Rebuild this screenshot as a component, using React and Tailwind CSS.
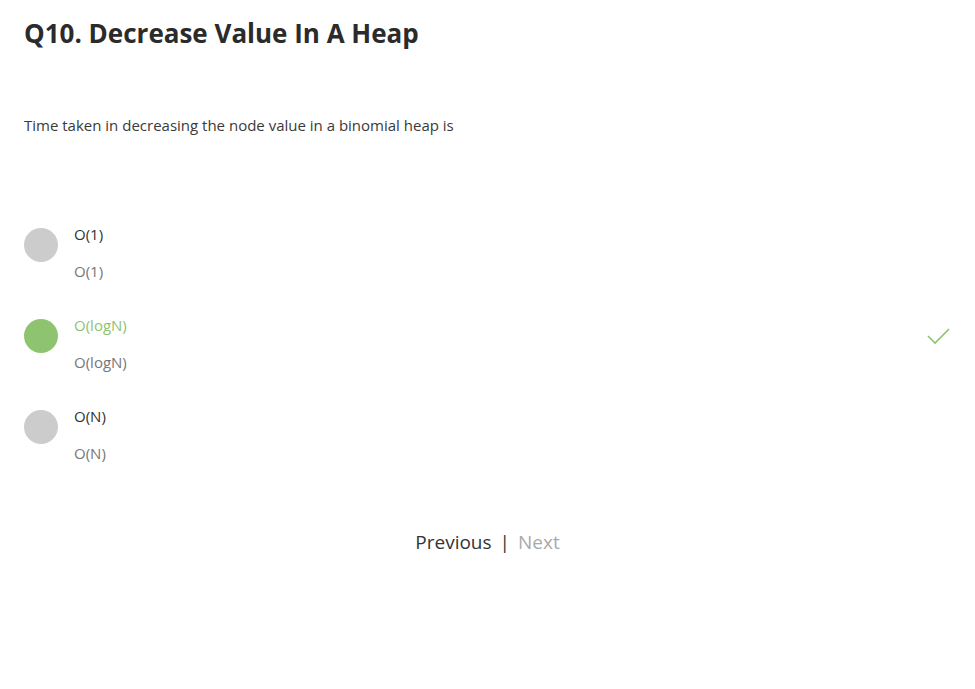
import React from 'react';

const options = [
  { label: 'O(1)', sub: 'O(1)', correct: false },
  { label: 'O(logN)', sub: 'O(logN)', correct: true },
  { label: 'O(N)', sub: 'O(N)', correct: false },
];

export default function App() {
  return (
    <div className="min-h-screen w-full bg-white text-[#333] font-['Open_Sans','Noto_Sans',sans-serif]">
      <div className="px-6 pt-[15px]">
        {/* title */}
        <h1 className="text-[26px] leading-[36px] font-bold text-[#2b2b2b]">
          Q10. Decrease Value In A Heap
        </h1>

        {/* question */}
        <p className="mt-[64px] text-[15px] leading-[20px] text-[#3a3a3a]">
          Time taken in decreasing the node value in a binomial heap is
        </p>

        {/* options */}
        <div className="mt-[90px] flex flex-col gap-[35px]">
          {options.map((o) => (
            <div key={o.label} className="flex items-start h-[56px]">
              <div
                className={
                  'mt-[3px] w-[34px] h-[34px] rounded-full shrink-0 ' +
                  (o.correct ? 'bg-[#8ec36f]' : 'bg-[#cccccc]')
                }
              />
              <div className="ml-4 flex flex-col gap-[18px] text-[15px] leading-[19px]">
                <span className={o.correct ? 'text-[#8ec36f]' : 'text-[#333]'}>{o.label}</span>
                <span className="text-[#777]">{o.sub}</span>
              </div>
              <div className="flex-1" />
              {o.correct && (
                <svg className="mt-[11px] w-[23px] h-[18px] mr-[1px]" viewBox="0 0 23 18" fill="none" stroke="#8ec36f" strokeWidth="1.6">
                  <path d="M1 9l7 7L22 2" />
                </svg>
              )}
            </div>
          ))}
        </div>

        {/* nav */}
        <div className="mt-[67px] flex justify-center items-center text-[19px] leading-[24px]">
          <span className="text-[#333]">Previous</span>
          <span className="mx-[8px] text-[#333]">|</span>
          <span className="text-[#aaa]">Next</span>
        </div>
      </div>
    </div>
  );
}
